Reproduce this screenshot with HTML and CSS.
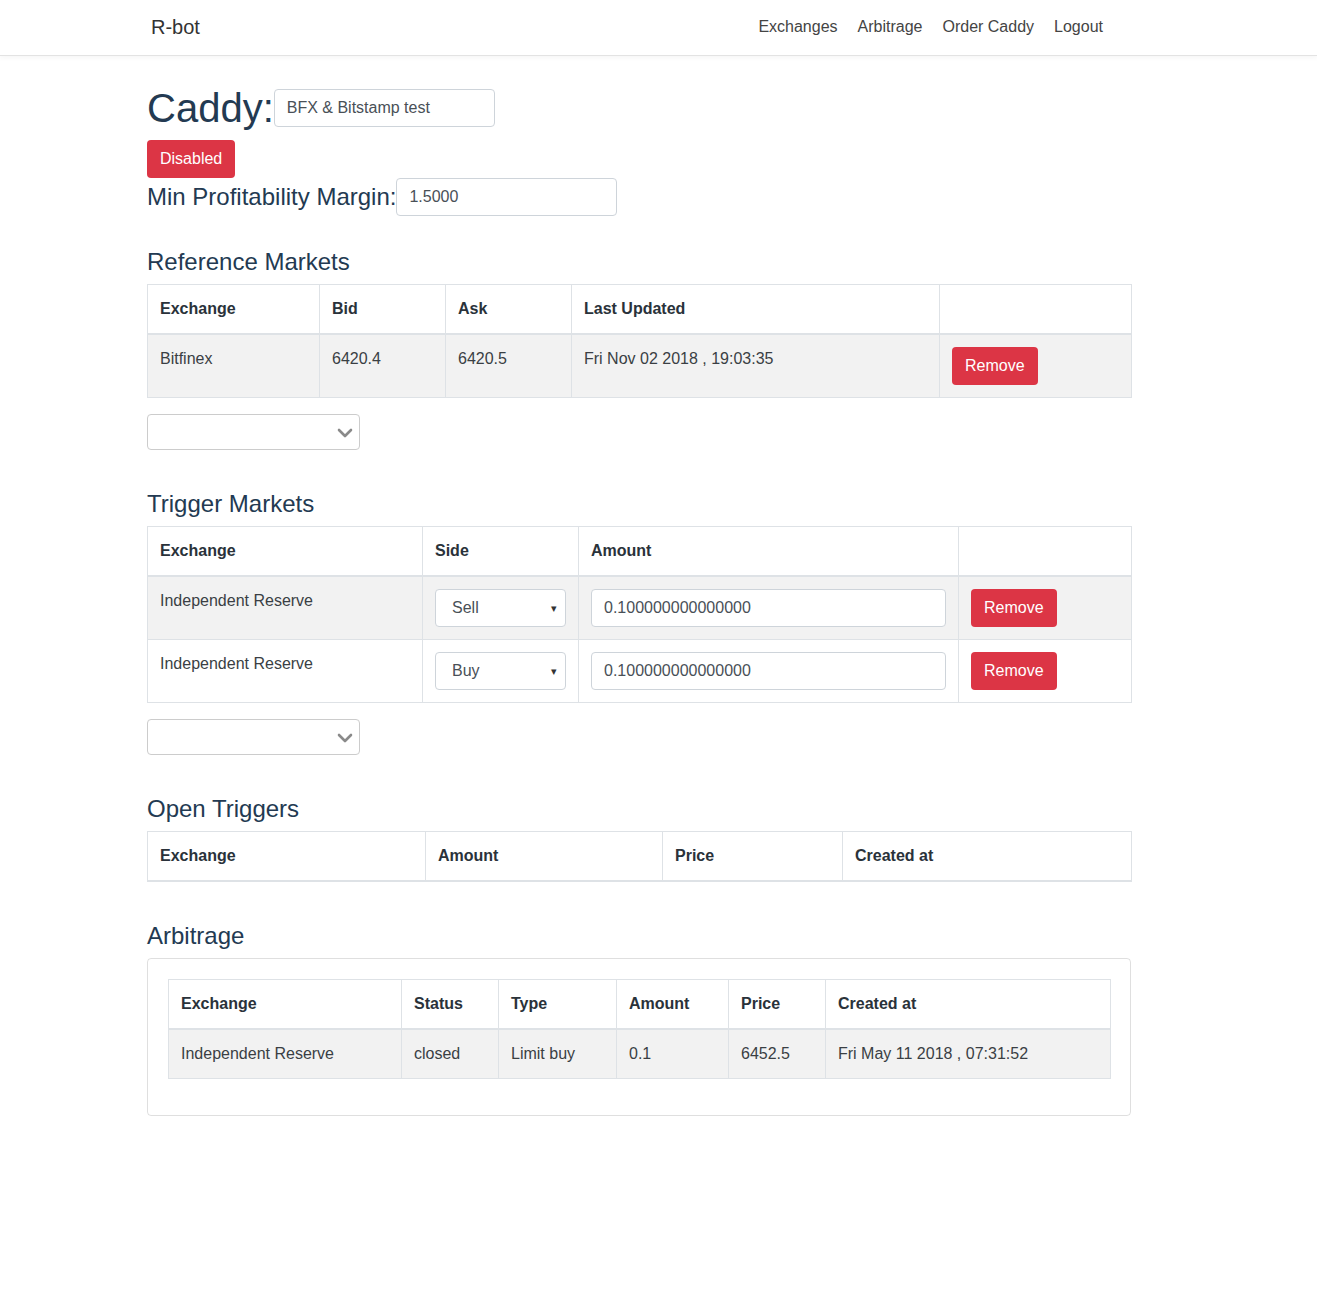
FILE: index.html
```html
<!DOCTYPE html>
<html>
<head>
<meta charset="utf-8">
<title>R-bot</title>
<link rel="stylesheet" href="styles.css">
</head>
<body>
<header class="navbar">
  <div class="nav-inner">
    <a class="brand">R-bot</a>
    <nav class="nav">
      <a class="nav-link">Exchanges</a>
      <a class="nav-link">Arbitrage</a>
      <a class="nav-link">Order Caddy</a>
      <a class="nav-link">Logout</a>
    </nav>
  </div>
</header>

<main class="container">
  <div class="caddy-row">
    <h1 class="caddy-title">Caddy:</h1>
    <input class="form-control name-input" type="text" value="BFX &amp; Bitstamp test">
  </div>
  <button class="btn btn-danger">Disabled</button>
  <div class="margin-row">
    <span class="margin-label">Min Profitability Margin:</span>
    <input class="form-control margin-input" type="text" value="1.5000">
  </div>

  <h4 class="section-title first">Reference Markets</h4>
  <table class="table">
    <colgroup>
      <col class="w172"><col class="w126"><col class="w126"><col class="w368"><col class="w192">
    </colgroup>
    <thead>
      <tr><th>Exchange</th><th>Bid</th><th>Ask</th><th>Last Updated</th><th></th></tr>
    </thead>
    <tbody>
      <tr class="striped">
        <td>Bitfinex</td><td>6420.4</td><td>6420.5</td><td>Fri Nov 02 2018 , 19:03:35</td>
        <td><button class="btn btn-danger">Remove</button></td>
      </tr>
    </tbody>
  </table>
  <div class="chev-select">
    <svg class="chev" width="16" height="10" viewBox="0 0 16 10"><path d="M2 2 L8 8 L14 2" fill="none" stroke="#8a8a8a" stroke-width="2.6" stroke-linecap="round" stroke-linejoin="round"/></svg>
  </div>

  <h4 class="section-title">Trigger Markets</h4>
  <table class="table">
    <colgroup>
      <col class="w275"><col class="w156"><col class="w380"><col class="w173">
    </colgroup>
    <thead>
      <tr><th>Exchange</th><th>Side</th><th>Amount</th><th></th></tr>
    </thead>
    <tbody>
      <tr class="striped">
        <td>Independent Reserve</td>
        <td><div class="side-select"><span>Sell</span><span class="caret">▾</span></div></td>
        <td><input class="form-control amount-input" type="text" value="0.100000000000000"></td>
        <td><button class="btn btn-danger">Remove</button></td>
      </tr>
      <tr>
        <td>Independent Reserve</td>
        <td><div class="side-select"><span>Buy</span><span class="caret">▾</span></div></td>
        <td><input class="form-control amount-input" type="text" value="0.100000000000000"></td>
        <td><button class="btn btn-danger">Remove</button></td>
      </tr>
    </tbody>
  </table>
  <div class="chev-select">
    <svg class="chev" width="16" height="10" viewBox="0 0 16 10"><path d="M2 2 L8 8 L14 2" fill="none" stroke="#8a8a8a" stroke-width="2.6" stroke-linecap="round" stroke-linejoin="round"/></svg>
  </div>

  <h4 class="section-title">Open Triggers</h4>
  <table class="table">
    <colgroup>
      <col class="w278"><col class="w237"><col class="w180"><col class="w289">
    </colgroup>
    <thead>
      <tr><th>Exchange</th><th>Amount</th><th>Price</th><th>Created at</th></tr>
    </thead>
    <tbody></tbody>
  </table>

  <h4 class="section-title after-table">Arbitrage</h4>
  <div class="card">
    <table class="table">
      <colgroup>
        <col class="w233"><col class="w97"><col class="w118"><col class="w112"><col class="w97"><col class="w285">
      </colgroup>
      <thead>
        <tr><th>Exchange</th><th>Status</th><th>Type</th><th>Amount</th><th>Price</th><th>Created at</th></tr>
      </thead>
      <tbody>
        <tr class="striped">
          <td>Independent Reserve</td><td>closed</td><td>Limit buy</td><td>0.1</td><td>6452.5</td><td>Fri May 11 2018 , 07:31:52</td>
        </tr>
      </tbody>
    </table>
  </div>
</main>
</body>
</html>
```

FILE: styles.css
```css
* { box-sizing: border-box; }

body {
  margin: 0;
  font-family: "Liberation Sans", Arial, sans-serif;
  font-size: 16px;
  line-height: 1.5;
  color: #212529;
  background: #fff;
}

.navbar {
  height: 56px;
  border-bottom: 1px solid #e3e3e3;
  box-shadow: 0 2px 5px rgba(0, 0, 0, 0.04);
  background: #fff;
}

.nav-inner {
  height: 55px;
  display: flex;
  align-items: center;
  padding-left: 151px;
  padding-right: 204px;
}

.brand {
  font-size: 20px;
  color: #333;
  line-height: 1;
  margin-top: -2px;
}

.nav {
  margin-left: auto;
  display: flex;
}

.nav-link {
  padding: 0 10px;
  color: #444;
  font-size: 16px;
  margin-top: -2px;
}

.container {
  margin-left: 147px;
  width: 984px;
  padding-bottom: 120px;
}

.caddy-row {
  display: flex;
  align-items: center;
  margin-top: 28px;
  height: 48px;
  margin-bottom: 8px;
}

.caddy-title {
  margin: 0;
  font-size: 40px;
  font-weight: 400;
  line-height: 48px;
  color: #233a52;
}

.form-control {
  display: block;
  height: 38px;
  padding: 0 12px;
  font-family: "Liberation Sans", Arial, sans-serif;
  font-size: 16px;
  color: #495057;
  background: #fff;
  border: 1px solid #ced4da;
  border-radius: 4px;
  outline: none;
}

.name-input {
  width: 221px;
}

.btn {
  display: inline-block;
  height: 38px;
  padding: 0 13px;
  font-family: "Liberation Sans", Arial, sans-serif;
  font-size: 16px;
  line-height: 38px;
  border: none;
  border-radius: 4px;
  cursor: pointer;
  vertical-align: top;
}

.btn-danger {
  background: #dc3545;
  color: #fff;
}

.margin-row {
  display: flex;
  align-items: center;
  height: 38px;
}

.margin-label {
  font-size: 24px;
  line-height: 28.8px;
  color: #233a52;
}

.margin-input {
  width: 221px;
}

.section-title {
  margin: 39px 0 8px;
  font-size: 24px;
  font-weight: 400;
  line-height: 29px;
  color: #233a52;
}

.section-title.first { margin-top: 31px; }
.section-title.after-table { margin-top: 39px; }

.table {
  width: 100%;
  table-layout: fixed;
  border-collapse: collapse;
  margin-bottom: 16px;
  color: #3a3f44;
}

.table th,
.table td {
  padding: 12px;
  border: 1px solid #dee2e6;
  vertical-align: top;
  text-align: left;
  line-height: 24px;
}

.table th {
  font-weight: 700;
  color: #2a323a;
}

.table thead th {
  border-bottom: 2px solid #dee2e6;
}

.table tr.striped td { background: #f2f2f2; }

.w172 { width: 172px; } .w126 { width: 126px; } .w368 { width: 368px; } .w192 { width: 192px; }
.w275 { width: 275px; } .w156 { width: 156px; } .w380 { width: 380px; } .w173 { width: 173px; }
.w278 { width: 278px; } .w237 { width: 237px; } .w180 { width: 180px; } .w289 { width: 289px; }
.w233 { width: 233px; } .w97 { width: 97px; } .w118 { width: 118px; } .w112 { width: 112px; } .w285 { width: 285px; }

.chev-select {
  width: 213px;
  height: 36px;
  margin-top: 1px;
  border: 1px solid #cccccc;
  border-radius: 4px;
  background: #fff;
  display: flex;
  align-items: center;
  justify-content: flex-end;
  padding-right: 6px;
}

.chev { display: block; margin-top: 1px; }

.side-select {
  height: 38px;
  width: 100%;
  border: 1px solid #ced4da;
  border-radius: 4px;
  background: #fff;
  display: flex;
  align-items: center;
  justify-content: space-between;
  padding: 0 8px 0 16px;
  color: #495057;
}

.caret {
  font-size: 11px;
  color: #333;
}

.amount-input { width: 100%; }

.card {
  border: 1px solid rgba(0, 0, 0, 0.125);
  border-radius: 4px;
  padding: 20px 20px 20px;
}
```
